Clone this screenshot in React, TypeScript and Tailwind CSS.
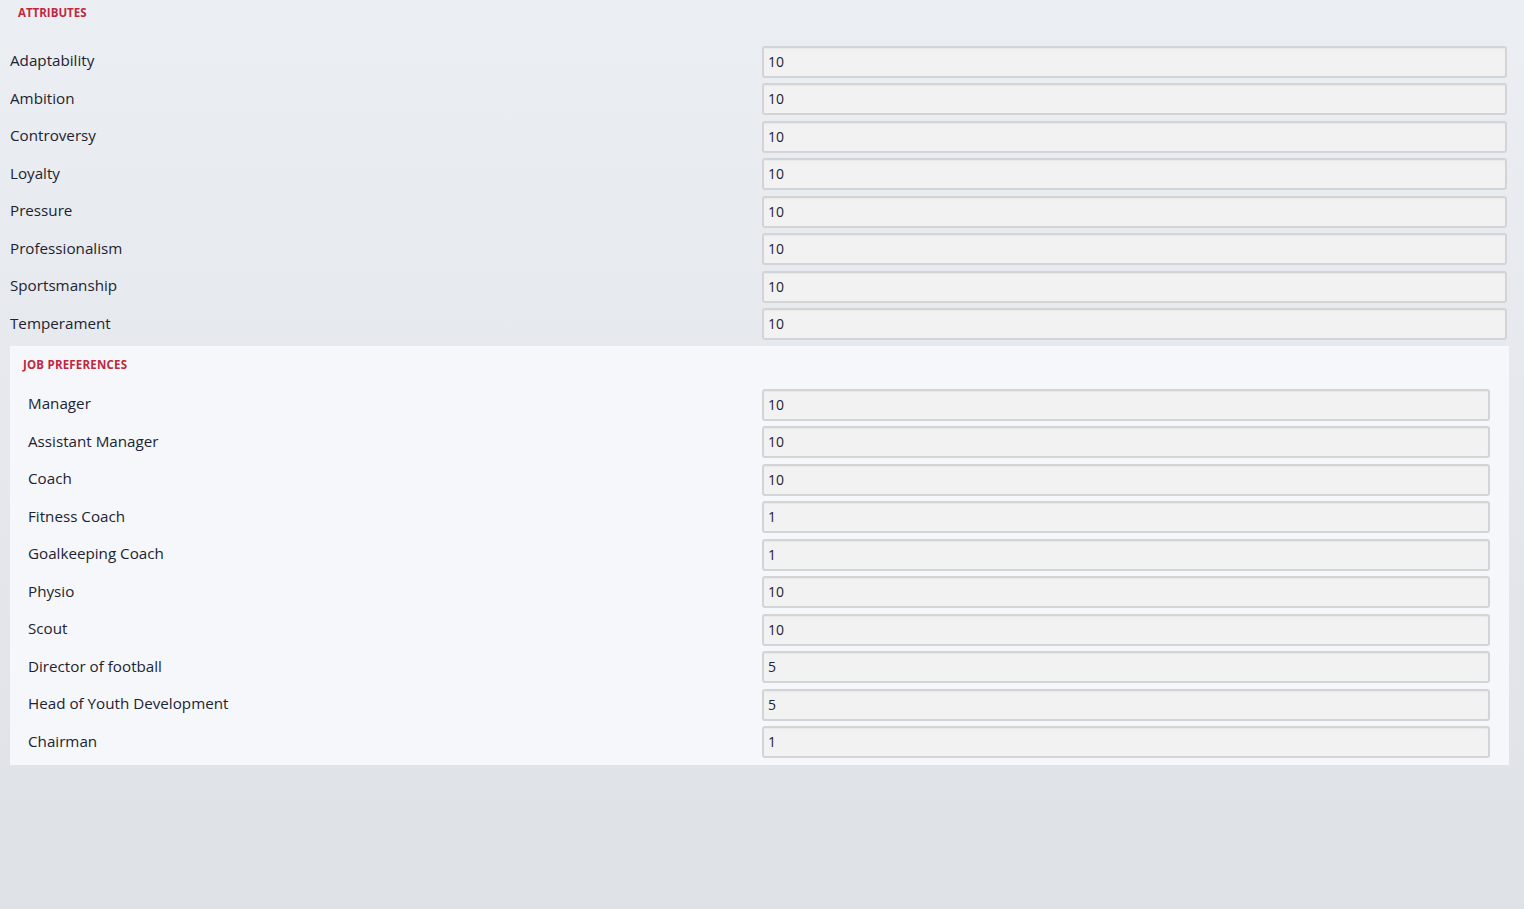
import React from "react";

const attributes: [string, string][] = [
  ["Adaptability", "10"],
  ["Ambition", "10"],
  ["Controversy", "10"],
  ["Loyalty", "10"],
  ["Pressure", "10"],
  ["Professionalism", "10"],
  ["Sportsmanship", "10"],
  ["Temperament", "10"],
];

const jobs: [string, string][] = [
  ["Manager", "10"],
  ["Assistant Manager", "10"],
  ["Coach", "10"],
  ["Fitness Coach", "1"],
  ["Goalkeeping Coach", "1"],
  ["Physio", "10"],
  ["Scout", "10"],
  ["Director of football", "5"],
  ["Head of Youth Development", "5"],
  ["Chairman", "1"],
];

function Field({ value, width }: { value: string; width: string }) {
  return (
    <div
      className={`${width} h-[32px] flex items-center pl-[4px] pb-[1px] rounded-[3px] border-2 border-[#d2d4d7] bg-[#f2f2f2] text-[14px] text-[#1d2331] shadow-[inset_0_1px_1px_rgba(0,0,0,0.04)]`}
    >
      {value}
    </div>
  );
}

export default function App() {
  return (
    <div className="min-h-[909px] w-full bg-gradient-to-b from-[#ebeef2] to-[#dee2e7] font-['Open_Sans',sans-serif]">
      <div className="w-[1509px] pl-[10px]">
        <div className="h-[43px] pt-[6px] pl-[8px]">
          <div className="text-[11.5px] leading-[14px] font-bold text-[#c0283f] uppercase">
            Attributes
          </div>
        </div>
        <div>
          {attributes.map(([label, value]) => (
            <div key={label} className="h-[37.5px] flex items-center">
              <div className="flex-1 pb-[2px] text-[15.2px] text-[#1d2331]">{label}</div>
              <Field value={value} width="w-[745px]" />
              <div className="w-[2px]" />
            </div>
          ))}
        </div>
        <div className="mt-[3px] bg-[#f5f7fa] pb-[4px]">
          <div className="h-[40px] pt-[12px] pl-[13px]">
            <div className="text-[11.5px] leading-[14px] font-bold text-[#c0283f] uppercase tracking-[0.2px]">
              Job Preferences
            </div>
          </div>
          {jobs.map(([label, value]) => (
            <div key={label} className="h-[37.5px] flex items-center">
              <div className="flex-1 pl-[18px] pb-[2px] text-[15.2px] text-[#1d2331]">{label}</div>
              <Field value={value} width="w-[728px]" />
              <div className="w-[19px]" />
            </div>
          ))}
        </div>
      </div>
    </div>
  );
}
